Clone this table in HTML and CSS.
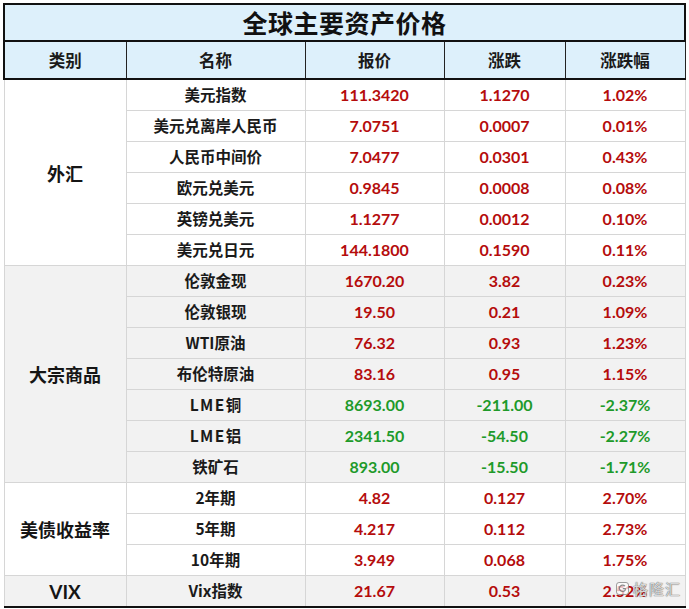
FILE: index.html
```html
<!DOCTYPE html>
<html lang="zh-CN">
<head>
<meta charset="utf-8">
<title>全球主要资产价格</title>
<link rel="stylesheet" href="styles.css">
</head>
<body>
<div class="sheet">
  <table class="assets">
    <colgroup>
      <col class="c-cat"><col class="c-name"><col class="c-price"><col class="c-chg"><col class="c-pct">
    </colgroup>
    <thead>
      <tr class="title-row"><th colspan="5">全球主要资产价格</th></tr>
      <tr class="head-row"><th>类别</th><th>名称</th><th>报价</th><th>涨跌</th><th>涨跌幅</th></tr>
    </thead>
    <tbody class="grp white">
      <tr><td class="cat" rowspan="6">外汇</td><td class="name">美元指数</td><td class="up">111.3420</td><td class="up">1.1270</td><td class="up">1.02%</td></tr>
      <tr><td class="name">美元兑离岸人民币</td><td class="up">7.0751</td><td class="up">0.0007</td><td class="up">0.01%</td></tr>
      <tr><td class="name">人民币中间价</td><td class="up">7.0477</td><td class="up">0.0301</td><td class="up">0.43%</td></tr>
      <tr><td class="name">欧元兑美元</td><td class="up">0.9845</td><td class="up">0.0008</td><td class="up">0.08%</td></tr>
      <tr><td class="name">英镑兑美元</td><td class="up">1.1277</td><td class="up">0.0012</td><td class="up">0.10%</td></tr>
      <tr><td class="name">美元兑日元</td><td class="up">144.1800</td><td class="up">0.1590</td><td class="up">0.11%</td></tr>
    </tbody>
    <tbody class="grp gray">
      <tr><td class="cat" rowspan="7">大宗商品</td><td class="name">伦敦金现</td><td class="up">1670.20</td><td class="up">3.82</td><td class="up">0.23%</td></tr>
      <tr><td class="name">伦敦银现</td><td class="up">19.50</td><td class="up">0.21</td><td class="up">1.09%</td></tr>
      <tr><td class="name">WTI原油</td><td class="up">76.32</td><td class="up">0.93</td><td class="up">1.23%</td></tr>
      <tr><td class="name">布伦特原油</td><td class="up">83.16</td><td class="up">0.95</td><td class="up">1.15%</td></tr>
      <tr><td class="name"><span class="lat">LME</span>铜</td><td class="down">8693.00</td><td class="down">-211.00</td><td class="down">-2.37%</td></tr>
      <tr><td class="name"><span class="lat">LME</span>铝</td><td class="down">2341.50</td><td class="down">-54.50</td><td class="down">-2.27%</td></tr>
      <tr><td class="name">铁矿石</td><td class="down">893.00</td><td class="down">-15.50</td><td class="down">-1.71%</td></tr>
    </tbody>
    <tbody class="grp white">
      <tr><td class="cat" rowspan="3">美债收益率</td><td class="name">2年期</td><td class="up">4.82</td><td class="up">0.127</td><td class="up">2.70%</td></tr>
      <tr><td class="name">5年期</td><td class="up">4.217</td><td class="up">0.112</td><td class="up">2.73%</td></tr>
      <tr><td class="name">10年期</td><td class="up">3.949</td><td class="up">0.068</td><td class="up">1.75%</td></tr>
    </tbody>
    <tbody class="grp gray last">
      <tr><td class="cat vix">VIX</td><td class="name">Vix指数</td><td class="up">21.67</td><td class="up">0.53</td><td class="up">2.52%</td></tr>
    </tbody>
  </table>
  <div class="watermark">
    <svg class="wm-icon" width="13" height="13" viewBox="0 0 13 13" aria-hidden="true">
      <rect x="0.5" y="0.5" width="12" height="12" rx="2.5" fill="rgba(255,255,255,0.7)" stroke="rgba(120,120,120,0.7)"/>
      <path d="M9 4.2 A3.2 3.2 0 1 0 9.3 8 L9.3 6.6 L6.8 6.6" fill="none" stroke="rgba(110,110,110,0.8)" stroke-width="1.2"/>
    </svg>
    <span class="wm-text">格隆汇</span>
  </div>
</div>
</body>
</html>
```

FILE: styles.css
```css
html, body {
  margin: 0;
  padding: 0;
  background: #ffffff;
}

body {
  font-family: "Lato", "Noto Sans CJK SC", sans-serif;
}

.sheet {
  position: relative;
  width: 689px;
  height: 609px;
  padding: 3px 0 0 3px;
  box-sizing: border-box;
  overflow: hidden;
}

.assets {
  border-collapse: collapse;
  table-layout: fixed;
  width: 681px;
}

.c-cat { width: 122px; }
.c-name { width: 179px; }
.c-price { width: 139px; }
.c-chg { width: 121px; }
.c-pct { width: 120px; }

.assets th,
.assets td {
  padding: 0;
  text-align: center;
  vertical-align: middle;
  white-space: nowrap;
  line-height: 1;
}

.title-row th {
  height: 35px;
  background: #ddf0fb;
  border: 2px solid #111111;
  font-family: "Noto Sans CJK SC", sans-serif;
  font-size: 25px;
  font-weight: 700;
  color: #111111;
  letter-spacing: 0.5px;
}

.head-row th {
  height: 36px;
  background: #ddf0fb;
  border: 1px solid #222222;
  border-bottom: 2px solid #111111;
  font-family: "Noto Sans CJK SC", sans-serif;
  font-size: 16.5px;
  font-weight: 700;
  color: #1a1a1a;
}

.head-row th:first-child { border-left: 2px solid #111111; }

.assets td {
  height: 30px;
  border: 1px solid #d6d6d6;
  font-size: 16px;
  font-weight: 700;
}

.assets .grp.gray td { background: #f2f2f2; }
.assets .grp.white td { background: #ffffff; }

.assets .grp.last td { border-bottom: 2px solid #111111; }

.assets .cat {
  font-family: "Noto Sans CJK SC", sans-serif;
  font-size: 18px;
  color: #151515;
}

.assets .cat.vix {
  font-family: "Lato", "Noto Sans CJK SC", sans-serif;
  font-size: 19px;
}

.assets .name {
  font-family: "Noto Sans CJK SC", sans-serif;
  font-size: 15.5px;
  color: #1a1a1a;
}

.lat { letter-spacing: 1.5px; }

.up { color: #b50c0c; }
.down { color: #1e9a2a; }

.watermark {
  position: absolute;
  right: 8px;
  bottom: 10px;
  display: flex;
  align-items: center;
  gap: 4px;
}

.wm-text {
  font-family: "Noto Sans CJK SC", sans-serif;
  font-size: 15px;
  font-weight: 400;
  color: rgba(255, 255, 255, 0.75);
  text-shadow: 0 0 1px rgba(90, 90, 90, 0.9), 0 0 1px rgba(90, 90, 90, 0.9);
  letter-spacing: 1px;
}
```
